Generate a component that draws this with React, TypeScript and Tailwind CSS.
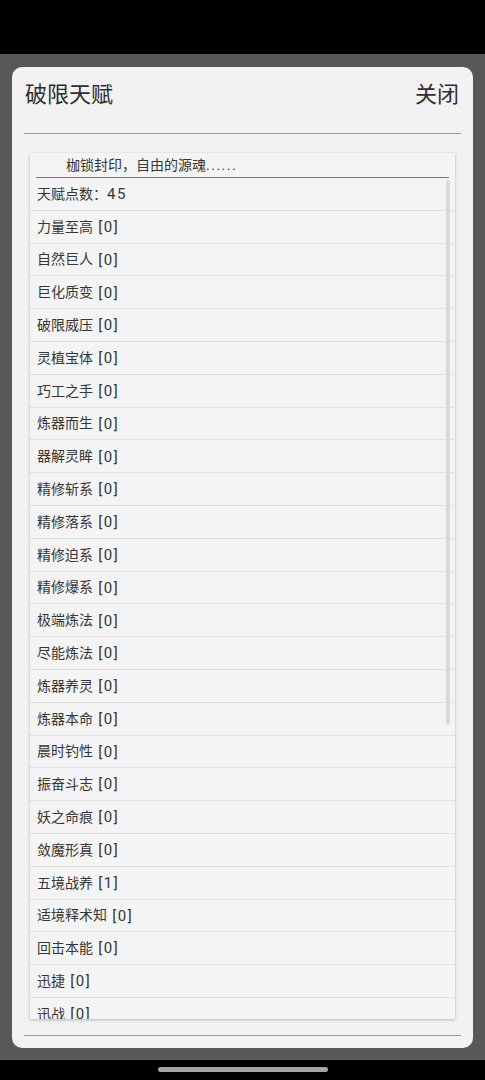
const talents = [
  '力量至高 [0]',
  '自然巨人 [0]',
  '巨化质变 [0]',
  '破限威压 [0]',
  '灵植宝体 [0]',
  '巧工之手 [0]',
  '炼器而生 [0]',
  '器解灵眸 [0]',
  '精修斩系 [0]',
  '精修落系 [0]',
  '精修迫系 [0]',
  '精修爆系 [0]',
  '极端炼法 [0]',
  '尽能炼法 [0]',
  '炼器养灵 [0]',
  '炼器本命 [0]',
  '晨时钓性 [0]',
  '振奋斗志 [0]',
  '妖之命痕 [0]',
  '敛魔形真 [0]',
  '五境战养 [1]',
  '适境释术知 [0]',
  '回击本能 [0]',
  '迅捷 [0]',
  '迅战 [0]',
]

// the device font draws latin wider than Roboto, so widen those runs a bit
function Mixed({ text }: { text: string }) {
  const parts = text.split(/([\u3000-\u9fff\uff00-\uffef]+)/).filter(Boolean)
  return (
    <>
      {parts.map((p, i) =>
        /[\u3000-\u9fff\uff00-\uffef]/.test(p) ? (
          <span key={i}>{p}</span>
        ) : (
          <span key={i} className="text-[15px] tracking-[1.5px]">
            {p}
          </span>
        )
      )}
    </>
  )
}

function TalentRow({ label }: { label: string }) {
  return (
    <div className="h-[32.8px] shrink-0 flex items-center pl-[7px] pt-[1px] border-b border-[#e1e1e1] text-[14px] text-[#363636] whitespace-pre">
      <Mixed text={label} />
    </div>
  )
}

export default function App() {
  return (
    <div
      className="w-[485px] h-[1080px] bg-black flex flex-col overflow-hidden"
      style={{ fontFamily: 'Roboto, "Noto Sans CJK SC", sans-serif' }}
    >
      <div className="h-[54px] shrink-0 bg-black" />

      <div className="h-[1006px] shrink-0 bg-[#585858] px-[12px] pt-[13px] pb-[12px]">
        <div className="h-[981px] bg-[#f2f2f2] rounded-[10px] flex flex-col">
          {/* title bar */}
          <div className="h-[66px] shrink-0 flex items-start justify-between pl-[13px] pr-[14px] pt-[13px]">
            <span className="text-[22px] leading-[30px] text-[#2e2e2e]">破限天赋</span>
            <span className="text-[22px] leading-[30px] text-[#2e2e2e]">关闭</span>
          </div>
          <div className="mx-[12px] h-px shrink-0 bg-[#9c9c9c]" />

          {/* talent panel */}
          <div className="relative mt-[19px] mx-[18px] h-[866px] shrink-0 bg-[#f4f4f4] overflow-hidden shadow-[0_1px_3px_rgba(0,0,0,0.25)]">
            <div className="mx-[6px] h-[25px] flex items-center pl-[30px] pt-[1px] border-b border-[#7a7a7a] text-[14px] text-[#363636]">
              枷锁封印，自由的源魂<span className="tracking-[1.5px]">......</span>
            </div>
            <div className="flex flex-col">
              <TalentRow label="天赋点数：45" />
              {talents.map((t) => (
                <TalentRow key={t} label={t} />
              ))}
            </div>
            <div className="absolute top-[27px] right-[5px] w-[4px] h-[545px] bg-[#dadada] rounded-full" />
          </div>

          <div className="mt-[16px] mx-[12px] h-px shrink-0 bg-[#9c9c9c]" />
        </div>
      </div>

      <div className="flex-1 flex justify-center pt-[7px]">
        <div className="w-[170px] h-[5px] rounded-full bg-[#a3a3a3]" />
      </div>
    </div>
  )
}
